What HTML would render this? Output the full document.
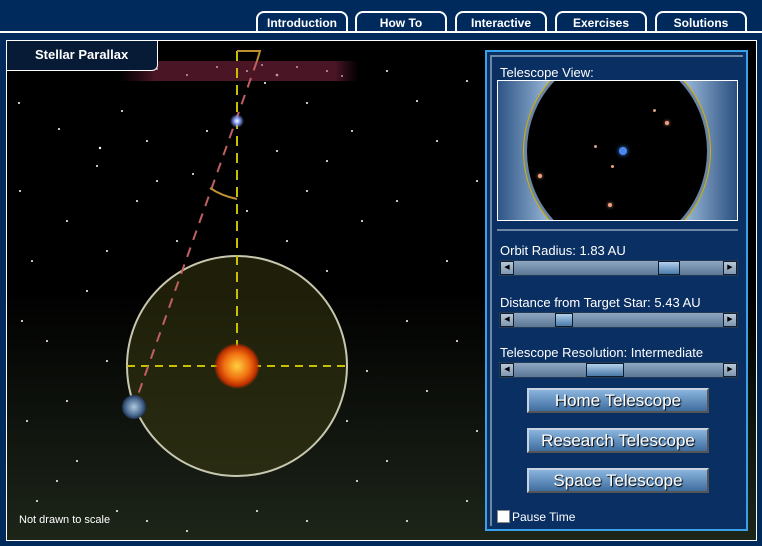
<!DOCTYPE html>
<html><head><meta charset="utf-8"><style>
*{margin:0;padding:0;box-sizing:border-box}
body{width:762px;height:546px;background:#002a5c;position:relative;overflow:hidden;font-family:"Liberation Sans",sans-serif}
.tab{position:absolute;top:11px;height:21px;border:2px solid #fff;border-bottom:none;border-radius:8px 8px 0 0;color:#fff;font-weight:bold;font-size:12px;text-align:center;line-height:20px;background:#002a5c}
.main{position:absolute;left:6px;top:40px;width:751px;height:501px;border:1px solid #fff;background:linear-gradient(#000 0%,#000 50%,#1d2519 100%);overflow:hidden}
.panel{position:absolute;left:485px;top:50px;width:263px;height:481px;border:2px solid #3aa0e8;background:#0a2f63}
.panel .in{position:absolute;left:3px;top:3px;right:3px;bottom:3px;border:2px solid #6d86a4;border-bottom:none;border-right:none}
.lbl{position:absolute;color:#fff;font-size:13px;left:13px}
.slider{position:absolute;left:12px;width:239px;height:16px;background:linear-gradient(#8ea7c2,#5b7796);border:1px solid #243a55}
.slider .a{position:absolute;top:0;width:14px;height:14px;background:linear-gradient(#b8c8d8,#7f97b0);border:1px solid #102030;font-size:7px;line-height:12px;text-align:center;color:#000}
.slider .t{position:absolute;top:0;height:14px;background:linear-gradient(#b3d0ec,#4a79a8);border:1px solid #0d1d30}
.btn{position:absolute;left:40px;width:182px;height:25px;background:linear-gradient(#8ab4de,#3e6d9e);border:2px solid;border-color:#c7d4e0 #555 #555 #c7d4e0;color:#fff;font-size:17px;text-align:center;line-height:21px;text-shadow:1px 1px 1px #000}
</style></head><body>
<div class="tab" style="left:256px;width:92px">Introduction</div>
<div class="tab" style="left:355px;width:92px">How To</div>
<div class="tab" style="left:455px;width:92px">Interactive</div>
<div class="tab" style="left:555px;width:92px">Exercises</div>
<div class="tab" style="left:655px;width:92px">Solutions</div>
<div style="position:absolute;left:0;top:31px;width:762px;height:2px;background:#fff"></div>
<div class="main">
<svg width="751" height="501" style="position:absolute;left:0;top:0">
<defs>
<radialGradient id="sun"><stop offset="0" stop-color="#ffd040"/><stop offset=".55" stop-color="#f07010"/><stop offset=".85" stop-color="#c03000"/><stop offset="1" stop-color="#c03000" stop-opacity="0"/></radialGradient>
<radialGradient id="st"><stop offset="0" stop-color="#fff"/><stop offset=".4" stop-color="#8aa0ff"/><stop offset="1" stop-color="#8aa0ff" stop-opacity="0"/></radialGradient>
<radialGradient id="ea"><stop offset="0" stop-color="#b0c8e0"/><stop offset=".7" stop-color="#4a6a90"/><stop offset="1" stop-color="#203050"/></radialGradient>
<linearGradient id="mw" x1="0" x2="1"><stop offset="0" stop-color="#3a1020" stop-opacity="0"/><stop offset=".15" stop-color="#4a1626"/><stop offset=".9" stop-color="#4a1626"/><stop offset="1" stop-color="#3a1020" stop-opacity="0"/></linearGradient>
</defs>
<rect x="112" y="20" width="240" height="20" fill="url(#mw)"/>
<g fill="#e8c0c0" opacity=".8"><circle cx="150" cy="28" r="1"/><circle cx="180" cy="34" r="1"/><circle cx="210" cy="26" r="1"/><circle cx="240" cy="30" r="1"/><circle cx="270" cy="34" r="1.3"/><circle cx="290" cy="26" r="1"/><circle cx="320" cy="30" r="1"/><circle cx="335" cy="35" r="1"/><circle cx="255" cy="24" r="1"/></g>
<g fill="#fff">
<circle cx="45" cy="23" r="1"/><circle cx="52" cy="88" r="1"/><circle cx="12" cy="62" r="1"/><circle cx="90" cy="125" r="1"/><circle cx="150" cy="140" r="1"/><circle cx="200" cy="90" r="1"/><circle cx="258" cy="42" r="1"/><circle cx="300" cy="62" r="1"/><circle cx="320" cy="120" r="1"/><circle cx="345" cy="90" r="1"/><circle cx="93" cy="107" r="1.2"/><circle cx="186" cy="133" r="1"/><circle cx="130" cy="160" r="1"/><circle cx="60" cy="180" r="1"/><circle cx="25" cy="220" r="1"/><circle cx="80" cy="250" r="1"/><circle cx="40" cy="300" r="1"/><circle cx="100" cy="320" r="1"/><circle cx="20" cy="380" r="1"/><circle cx="70" cy="420" r="1"/><circle cx="30" cy="460" r="1"/><circle cx="110" cy="470" r="1"/><circle cx="180" cy="490" r="1"/><circle cx="300" cy="480" r="1"/><circle cx="380" cy="420" r="1"/><circle cx="420" cy="350" r="1"/><circle cx="400" cy="280" r="1"/><circle cx="440" cy="220" r="1"/><circle cx="390" cy="160" r="1"/><circle cx="430" cy="100" r="1"/><circle cx="460" cy="40" r="1"/><circle cx="380" cy="30" r="1"/><circle cx="280" cy="200" r="1"/><circle cx="320" cy="230" r="1"/><circle cx="170" cy="200" r="1"/><circle cx="60" cy="360" r="1"/><circle cx="360" cy="330" r="1"/><circle cx="460" cy="460" r="1"/><circle cx="240" cy="170" r="1"/><circle cx="300" cy="150" r="1"/>
<circle cx="13" cy="150" r="1"/><circle cx="115" cy="70" r="1"/><circle cx="140" cy="100" r="1"/><circle cx="355" cy="180" r="1"/><circle cx="470" cy="140" r="1"/><circle cx="450" cy="300" r="1"/><circle cx="470" cy="390" r="1"/><circle cx="350" cy="440" r="1"/><circle cx="250" cy="470" r="1"/><circle cx="140" cy="480" r="1"/><circle cx="50" cy="440" r="1"/><circle cx="15" cy="280" r="1"/><circle cx="100" cy="210" r="1"/><circle cx="270" cy="110" r="1"/><circle cx="410" cy="60" r="1"/><circle cx="340" cy="380" r="1"/><circle cx="400" cy="480" r="1"/></g>
<circle cx="230" cy="325" r="110" fill="#3d3d12" fill-opacity=".5" stroke="#c8c8b0" stroke-width="2"/>
<line x1="230" y1="10" x2="230" y2="325" stroke="#c8c000" stroke-width="2" stroke-dasharray="10,7"/>
<line x1="120" y1="325" x2="340" y2="325" stroke="#c8c000" stroke-width="2" stroke-dasharray="8,6"/>
<path d="M230 10 H253 L250 20" stroke="#c09030" stroke-width="2" fill="none"/>
<line x1="250" y1="20" x2="127" y2="365" stroke="#c06060" stroke-width="2" stroke-dasharray="10,8"/>
<path d="M203 147 Q215 155 230 158" stroke="#c09030" stroke-width="2" fill="none"/>
<circle cx="230" cy="80" r="7" fill="url(#st)"/>
<circle cx="230" cy="325" r="23" fill="url(#sun)"/>
<circle cx="127" cy="366" r="12" fill="url(#ea)"/>
</svg>
<div style="position:absolute;left:0;top:0;width:151px;height:30px;background:#071a36;border-right:1px solid #fff;border-bottom:1px solid #fff;border-radius:0 0 6px 0;color:#fff;font-weight:bold;font-size:13px;line-height:28px;padding-left:28px">Stellar Parallax</div>
<div style="position:absolute;left:12px;top:473px;color:#fff;font-size:11px">Not drawn to scale</div>
</div>
<div class="panel"><div class="in"></div>
<div class="lbl" style="top:13px">Telescope View:</div>
<div style="position:absolute;left:10px;top:28px;width:241px;height:141px;border:1px solid #fff;background:linear-gradient(90deg,#2e5585,#a9c6e4 25%,#a9c6e4 75%,#2a5080);overflow:hidden">
<div style="position:absolute;left:26px;top:-30px;width:186px;height:200px;border-radius:50%;background:#000;border:3px solid #6b86a4;box-shadow:0 0 0 1px #d4b000"></div>
<div style="position:absolute;left:121px;top:66px;width:8px;height:8px;border-radius:50%;background:#4a88f0;box-shadow:0 0 5px #4a88f0"></div>
<div style="position:absolute;left:167px;top:40px;width:4px;height:4px;border-radius:50%;background:#f0a080;box-shadow:0 0 3px #f0a080"></div>
<div style="position:absolute;left:40px;top:93px;width:4px;height:4px;border-radius:50%;background:#f0a080;box-shadow:0 0 3px #f0a080"></div>
<div style="position:absolute;left:110px;top:122px;width:4px;height:4px;border-radius:50%;background:#f0a080;box-shadow:0 0 3px #f0a080"></div>
<div style="position:absolute;left:113px;top:84px;width:3px;height:3px;border-radius:50%;background:#f0a080"></div>
<div style="position:absolute;left:96px;top:64px;width:3px;height:3px;border-radius:50%;background:#d0a080"></div>
<div style="position:absolute;left:155px;top:28px;width:3px;height:3px;border-radius:50%;background:#d0a080"></div>
</div>
<div style="position:absolute;left:10px;top:177px;width:241px;height:2px;background:#6d86a4"></div>
<div class="lbl" style="top:191px">Orbit Radius: 1.83 AU</div>
<div class="slider" style="top:208px"><div class="a" style="left:0">◀</div><div class="t" style="left:158px;width:22px"></div><div class="a" style="right:0">▶</div></div>
<div class="lbl" style="top:243px">Distance from Target Star: 5.43 AU</div>
<div class="slider" style="top:260px"><div class="a" style="left:0">◀</div><div class="t" style="left:55px;width:18px"></div><div class="a" style="right:0">▶</div></div>
<div class="lbl" style="top:293px">Telescope Resolution: Intermediate</div>
<div class="slider" style="top:310px"><div class="a" style="left:0">◀</div><div class="t" style="left:86px;width:38px"></div><div class="a" style="right:0">▶</div></div>
<div class="btn" style="top:336px">Home Telescope</div>
<div class="btn" style="top:376px">Research Telescope</div>
<div class="btn" style="top:416px">Space Telescope</div>
<div style="position:absolute;left:10px;top:458px;width:13px;height:13px;background:#fff;border:1px solid #888"></div>
<div style="position:absolute;left:25px;top:458px;color:#fff;font-size:12px">Pause Time</div>
</div>
</body></html>
